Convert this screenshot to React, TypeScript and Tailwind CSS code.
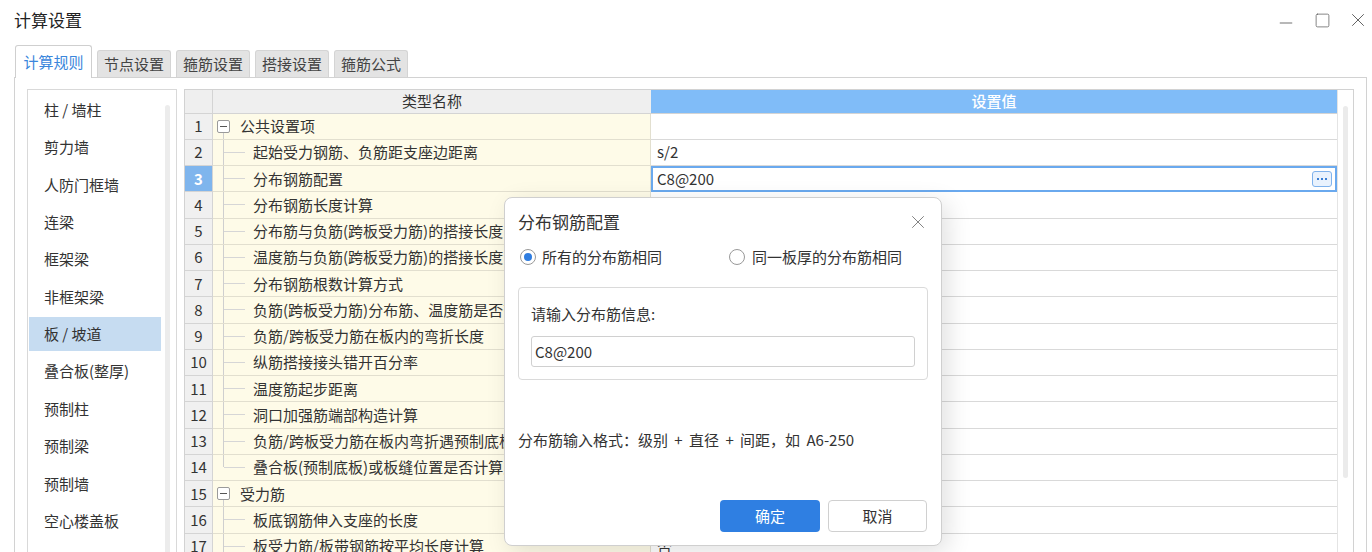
import { X, Minus, Square } from 'lucide-react'

interface Row {
  no: number
  name: string
  value?: string
  kind: 'parent' | 'child' | 'last'
}

const rows: Row[] = [
  { no: 1, name: '公共设置项', kind: 'parent' },
  { no: 2, name: '起始受力钢筋、负筋距支座边距离', value: 's/2', kind: 'child' },
  { no: 3, name: '分布钢筋配置', value: 'C8@200', kind: 'child' },
  { no: 4, name: '分布钢筋长度计算', kind: 'child' },
  { no: 5, name: '分布筋与负筋(跨板受力筋)的搭接长度', kind: 'child' },
  { no: 6, name: '温度筋与负筋(跨板受力筋)的搭接长度', kind: 'child' },
  { no: 7, name: '分布钢筋根数计算方式', kind: 'child' },
  { no: 8, name: '负筋(跨板受力筋)分布筋、温度筋是否带弯勾', kind: 'child' },
  { no: 9, name: '负筋/跨板受力筋在板内的弯折长度', kind: 'child' },
  { no: 10, name: '纵筋搭接接头错开百分率', kind: 'child' },
  { no: 11, name: '温度筋起步距离', kind: 'child' },
  { no: 12, name: '洞口加强筋端部构造计算', kind: 'child' },
  { no: 13, name: '负筋/跨板受力筋在板内弯折遇预制底板时', kind: 'child' },
  { no: 14, name: '叠合板(预制底板)或板缝位置是否计算支座负筋', kind: 'last' },
  { no: 15, name: '受力筋', kind: 'parent' },
  { no: 16, name: '板底钢筋伸入支座的长度', kind: 'child' },
  { no: 17, name: '板受力筋/板带钢筋按平均长度计算', value: '否', kind: 'child' },
]

const sideItems = [
  '柱 / 墙柱',
  '剪力墙',
  '人防门框墙',
  '连梁',
  '框架梁',
  '非框架梁',
  '板 / 坡道',
  '叠合板(整厚)',
  '预制柱',
  '预制梁',
  '预制墙',
  '空心楼盖板',
]

const tabs = ['计算规则', '节点设置', '箍筋设置', '搭接设置', '箍筋公式']

function TreeCell({ row }: { row: Row }) {
  if (row.kind === 'parent') {
    return (
      <div className="flex h-full items-stretch">
        <div className="ml-[4px] flex w-[13px] flex-col items-center">
          <div className="flex-1" />
          <div className="flex h-[13px] w-[13px] items-center justify-center rounded-[2px] border border-[#9a9a9a] bg-white">
            <div className="h-px w-[7px] bg-[#555]" />
          </div>
          <div className="w-px flex-1 bg-[#cfcfcf]" />
        </div>
        <span className="ml-[10px] self-center whitespace-nowrap">{row.name}</span>
      </div>
    )
  }
  return (
    <div className="flex h-full items-stretch">
      <div className="ml-[10px] flex w-px flex-col">
        <div className="flex-1 bg-[#cfcfcf]" />
        <div className={row.kind === 'last' ? 'flex-1' : 'flex-1 bg-[#cfcfcf]'} />
      </div>
      <div className="h-px w-[21px] self-center bg-[#d6d6d6]" />
      <span className="ml-[8px] self-center whitespace-nowrap">{row.name}</span>
    </div>
  )
}

export default function App() {
  return (
    <div className="relative h-[552px] w-[1372px] overflow-hidden bg-white font-['Noto_Sans_CJK_SC',sans-serif] text-[#333]">
      {/* title bar */}
      <div className="flex h-[40px] items-center justify-between pl-[14px]">
        <span className="text-[17px] leading-[22px] text-[#222]">计算设置</span>
        <div className="flex items-center text-[#555]">
          <Minus size={20} strokeWidth={1} className="mr-[18px] mt-[6px]" />
          <Square size={17} strokeWidth={1} className="mr-[16px]" />
          <X size={22} strokeWidth={1} className="mr-[3px]" />
        </div>
      </div>

      {/* tabs */}
      <div className="relative z-10 flex h-[37px] items-end gap-[5px] pl-[15px]">
        {tabs.map((t, i) =>
          i === 0 ? (
            <div
              key={t}
              className="-mb-px flex h-[33px] w-[77px] items-center justify-center rounded-t-[3px] border border-b-0 border-[#cfcfcf] bg-white text-[15px] text-[#3a86dc]"
            >
              {t}
            </div>
          ) : (
            <div
              key={t}
              className="flex h-[27px] w-[74px] items-center justify-center rounded-t-[3px] border border-b-0 border-[#d4d4d4] bg-[#e3e3e3] text-[15px] text-[#444]"
            >
              {t}
            </div>
          ),
        )}
      </div>

      {/* tab panel */}
      <div className="ml-[14px] flex h-[480px] w-[1353px] gap-[7px] border border-b-0 border-[#d2d2d2] pl-[12px] pt-[11px]">
        {/* sidebar */}
        <div className="flex h-[470px] w-[150px] border border-b-0 border-[#d9d9d9]">
          <div className="flex w-[133px] flex-col gap-[3.4px] pl-[1px] pt-[3px]">
            {sideItems.map(s => (
              <div
                key={s}
                className={
                  'flex h-[34px] items-center pl-[15px] text-[15px] ' +
                  (s === '板 / 坡道' ? 'bg-[#c6dcf1]' : '')
                }
              >
                {s}
              </div>
            ))}
          </div>
          <div className="ml-[4px] mt-[15px] w-[5px] rounded-[3px] bg-[#ececec]" />
        </div>

        {/* grid */}
        <div className="flex h-[470px] w-[1170px] border border-b-0 border-[#d2d2d2]">
          <div className="flex w-[1152px] flex-col">
            <div className="flex h-[25px] border-b border-[#d4d4d4] text-[15px]">
              <div className="w-[28px] border-r border-[#d4d4d4] bg-[#efefef]" />
              <div className="flex w-[438px] items-center justify-center bg-[#efefef] text-[#333]">类型名称</div>
              <div className="flex flex-1 items-center justify-center bg-[#80bcf8] font-medium text-white">设置值</div>
            </div>
            {rows.map(r => (
              <div key={r.no} className="flex h-[26.25px] shrink-0 text-[15px] leading-[20px]">
                <div
                  className={
                    'flex w-[28px] items-center justify-center border-r border-b border-[#d4d4d4] ' +
                    (r.no === 3 ? 'bg-[#7fb5ed] font-bold text-white' : 'bg-[#f0f0f0] text-[#333]')
                  }
                >
                  {r.no}
                </div>
                <div className="w-[438px] overflow-hidden border-r border-b border-[#e2dfcf] bg-[#fefbe8]">
                  <TreeCell row={r} />
                </div>
                {r.no === 3 ? (
                  <div className="flex flex-1 items-center justify-between border-2 border-[#6aa9ee] bg-white pl-[4px] pr-[3px]">
                    <span>{r.value}</span>
                    <div className="flex h-[16px] w-[20px] items-center justify-center gap-[2px] rounded-[3px] border border-[#7fb2ec] bg-[#e9f2fd]">
                      <div className="h-[2px] w-[2px] bg-[#3a7fd5]" />
                      <div className="h-[2px] w-[2px] bg-[#3a7fd5]" />
                      <div className="h-[2px] w-[2px] bg-[#3a7fd5]" />
                    </div>
                  </div>
                ) : (
                  <div className="flex flex-1 items-center border-b border-[#d9d9d9] bg-white pl-[6px]">{r.value}</div>
                )}
              </div>
            ))}
          </div>
          <div className="flex w-[16px] justify-center border-l border-[#e4e4e4] bg-white">
            <div className="mt-[16px] h-[372px] w-[5px] rounded-[3px] bg-[#ebebeb]" />
          </div>
        </div>
      </div>

      {/* dialog */}
      <div className="absolute left-[504px] top-[197px] z-20 flex h-[349px] w-[438px] flex-col rounded-[8px] border border-[#cfcfcf] bg-white pl-[13px] pr-[13px] shadow-[6px_6px_24px_rgba(0,0,0,0.12)]">
        <div className="mt-[13px] flex h-[22px] items-center justify-between">
          <span className="text-[17px] text-[#333]">分布钢筋配置</span>
          <X size={22} strokeWidth={1} className="-mr-[1px] text-[#777]" />
        </div>
        <div className="mt-[14px] flex h-[20px] items-center text-[15px]">
          <div className="ml-[2px] flex h-[16px] w-[16px] items-center justify-center rounded-full border border-[#999] bg-white">
            <div className="h-[8px] w-[8px] rounded-full bg-[#2f7de0]" />
          </div>
          <span className="ml-[6px]">所有的分布筋相同</span>
          <div className="ml-[67px] h-[16px] w-[16px] rounded-full border border-[#999] bg-white" />
          <span className="ml-[7px]">同一板厚的分布筋相同</span>
        </div>
        <div className="mt-[20px] flex h-[93px] w-[410px] flex-col rounded-[4px] border border-[#dadada] pl-[12px]">
          <span className="mt-[16px] h-[20px] text-[15px] leading-[20px]">请输入分布筋信息:</span>
          <div className="mt-[12px] flex h-[31px] w-[384px] items-center rounded-[3px] border border-[#d0d0d0] pl-[3px] text-[15px] leading-[20px]">
            C8@200
          </div>
        </div>
        <div className="mt-[50px] h-[20px] text-[15px] leading-[20px] [word-spacing:3px]">
          分布筋输入格式：级别 + 直径 + 间距，如 A6-250
        </div>
        <div className="mt-[50px] flex justify-end gap-[8px] pr-[1px]">
          <div className="flex h-[32px] w-[100px] items-center justify-center rounded-[4px] bg-[#2f7fe2] text-[15px] text-white">确定</div>
          <div className="flex h-[32px] w-[99px] items-center justify-center rounded-[4px] border border-[#d0d0d0] bg-white text-[15px]">取消</div>
        </div>
      </div>
    </div>
  )
}
